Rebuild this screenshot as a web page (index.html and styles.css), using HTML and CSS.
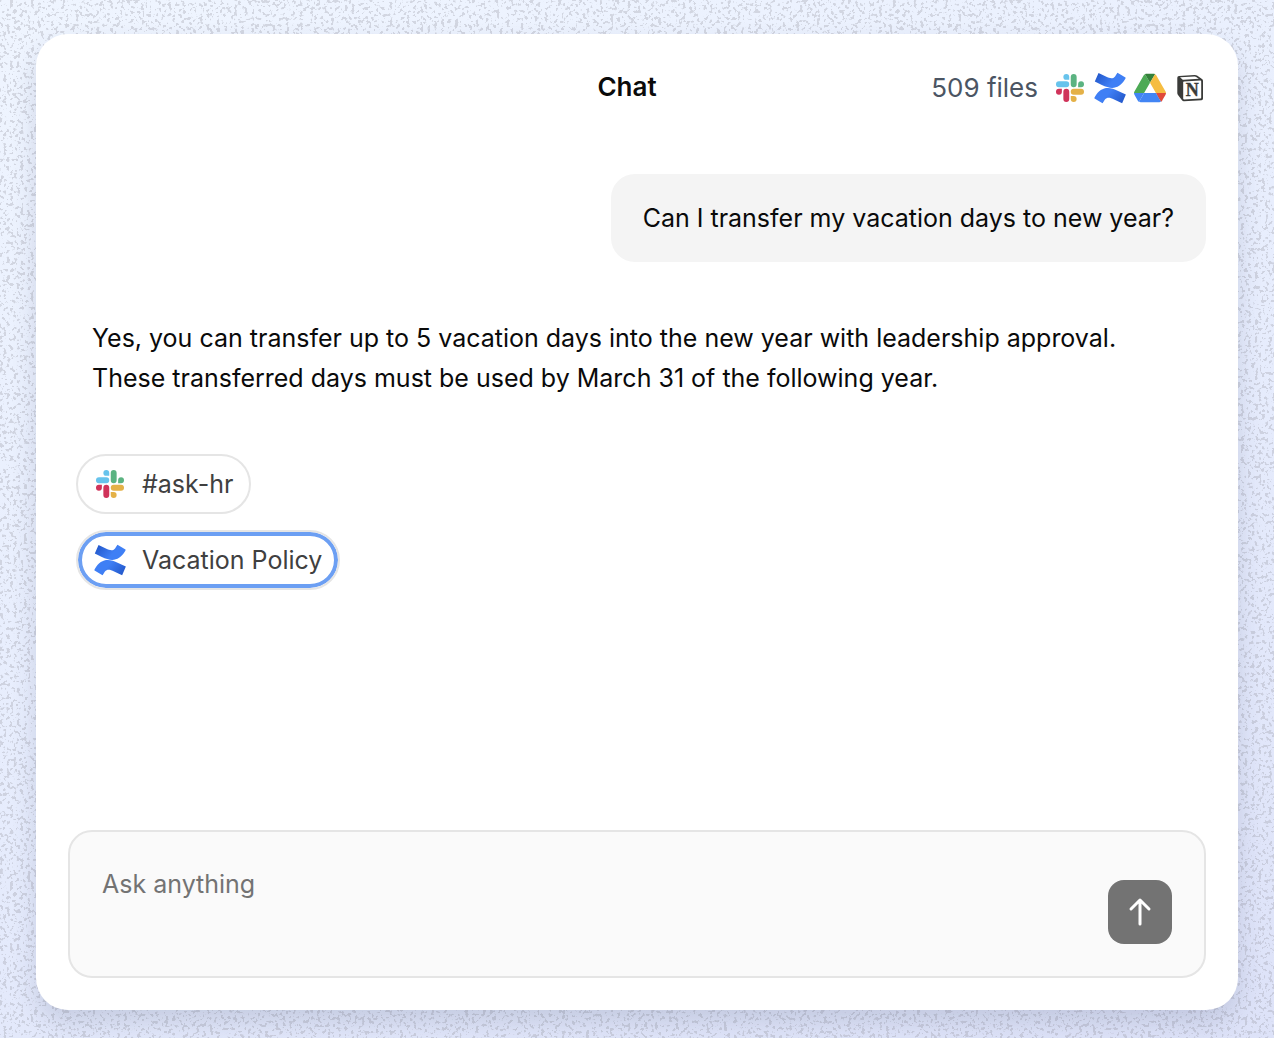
FILE: index.html
```html
<!DOCTYPE html>
<html lang="en">
<head>
  <meta charset="UTF-8" />
  <meta name="viewport" content="width=device-width, initial-scale=1.0" />
  <title>Chat</title>
  <link rel="stylesheet" href="styles.css">
</head>
<body>
  <svg class="grain" aria-hidden="true">
    <filter id="grain" x="0" y="0" width="100%" height="100%" color-interpolation-filters="sRGB">
      <feTurbulence type="fractalNoise" baseFrequency="0.29" numOctaves="2" seed="4" />
      <feColorMatrix values="0 0 0 0 0.6  0 0 0 0 0.6  0 0 0 0 0.64  16 0 0 0 -9" />
      <feComponentTransfer>
        <feFuncA type="linear" slope="0.32" />
      </feComponentTransfer>
    </filter>
    <rect width="100%" height="100%" filter="url(#grain)" />
  </svg>

  <!-- shared icons -->
  <svg class="sprite" aria-hidden="true">
    <defs>
      <linearGradient id="conf-top" x1="0" y1="0" x2="1" y2="0.4">
        <stop offset="0" stop-color="#1f52c4" />
        <stop offset="0.7" stop-color="#3f7ff5" />
      </linearGradient>
      <linearGradient id="conf-bottom" x1="1" y1="1" x2="0" y2="0.6">
        <stop offset="0" stop-color="#1f52c4" />
        <stop offset="0.7" stop-color="#3f7ff5" />
      </linearGradient>
    </defs>
    <symbol id="slack" viewBox="-1.7 -1.7 27.4 27.4">
      <path fill="#d0335a" d="M5.042 15.165a2.528 2.528 0 0 1-2.52 2.523A2.528 2.528 0 0 1 0 15.165a2.527 2.527 0 0 1 2.522-2.52h2.52zM6.313 15.165a2.527 2.527 0 0 1 2.521-2.52 2.527 2.527 0 0 1 2.521 2.52v6.313A2.528 2.528 0 0 1 8.834 24a2.528 2.528 0 0 1-2.521-2.522z" />
      <path fill="#67c3ec" d="M8.834 5.042a2.528 2.528 0 0 1-2.521-2.52A2.528 2.528 0 0 1 8.834 0a2.528 2.528 0 0 1 2.521 2.522v2.52zM8.834 6.313a2.528 2.528 0 0 1 2.521 2.521 2.528 2.528 0 0 1-2.521 2.521H2.522A2.528 2.528 0 0 1 0 8.834a2.528 2.528 0 0 1 2.522-2.521z" />
      <path fill="#5bb381" d="M18.956 8.834a2.528 2.528 0 0 1 2.522-2.521A2.528 2.528 0 0 1 24 8.834a2.528 2.528 0 0 1-2.522 2.521h-2.522zM17.688 8.834a2.528 2.528 0 0 1-2.523 2.521 2.527 2.527 0 0 1-2.52-2.521V2.522A2.527 2.527 0 0 1 15.165 0a2.528 2.528 0 0 1 2.523 2.522z" />
      <path fill="#e4b147" d="M15.165 18.956a2.528 2.528 0 0 1 2.523 2.522A2.528 2.528 0 0 1 15.165 24a2.527 2.527 0 0 1-2.52-2.522v-2.522zM15.165 17.688a2.527 2.527 0 0 1-2.52-2.523 2.526 2.526 0 0 1 2.52-2.52h6.313A2.527 2.527 0 0 1 24 15.165a2.528 2.528 0 0 1-2.522 2.523z" />
    </symbol>
    <symbol id="confluence" viewBox="0 0 24 24">
      <path fill="url(#conf-bottom)" d="M.6 18.700Q0 19.700.4 19.900L6.400 23.500C7 22.700 7.500 21.600 8.200 20.700 9.800 18.700 11.900 19 15.100 20.600L21.100 23.400 23.900 16.900 18.100 14.200C10.900 10.700 5.200 11 .6 18.700z" />
      <path fill="url(#conf-top)" d="M23.400 5.300Q24 4.300 23.600 4.100L17.600.5C17 1.300 16.500 2.400 15.800 3.300 14.200 5.300 12.100 5 8.900 3.400L3.400.7.6 7.100 5.900 9.800C13.100 13.300 18.800 13 23.400 5.300z" />
    </symbol>
    <symbol id="drive" viewBox="0 -4.6 87.3 87.3">
      <path fill="#4285f4" d="m6.6 66.85 3.85 6.65c.8 1.4 1.95 2.5 3.3 3.3l13.75-23.8h-27.5c0 1.55.4 3.1 1.2 4.5z" />
      <path fill="#4caa55" d="m43.65 25-13.75-23.8c-1.35.8-2.5 1.9-3.3 3.3l-25.4 44a9.06 9.06 0 0 0 -1.2 4.5h27.5z" />
      <path fill="#e04a3a" d="m73.55 76.8c1.35-.8 2.5-1.9 3.3-3.3l1.6-2.75 7.65-13.25c.8-1.4 1.2-2.95 1.2-4.5h-27.5l5.85 11.5z" />
      <path fill="#34803a" d="m43.65 25 13.75-23.8c-1.35-.8-2.9-1.2-4.5-1.2h-18.5c-1.6 0-3.15.45-4.5 1.2z" />
      <path fill="#4285f4" d="m59.8 53h-32.3l-13.75 23.8c1.35.8 2.9 1.2 4.5 1.2h50.8c1.6 0 3.15-.45 4.5-1.2z" />
      <path fill="#f6bd41" d="m73.4 26.5-12.7-22c-.8-1.4-1.95-2.5-3.3-3.3l-13.75 23.8 16.15 28h27.45c0-1.55-.4-3.1-1.2-4.5z" />
    </symbol>
  </svg>

  <main class="chat">
    <header class="chat-header">
      <h1>Chat</h1>
      <div class="sources">
        <span class="file-count">509 files</span>
        <div class="source-icons">
          <svg class="icon" role="img" aria-label="Slack"><use href="#slack" /></svg>
          <svg class="icon" role="img" aria-label="Confluence"><use href="#confluence" /></svg>
          <svg class="icon" role="img" aria-label="Google Drive"><use href="#drive" /></svg>
          <svg class="icon" viewBox="0 0 32 32" role="img" aria-label="Notion">
            <path fill="#3a3b39" d="M5 4 20.500 2.900Q22 2.800 23 3.500L28 7Q29 7.700 29 9V26.500Q29 28 27.500 28.200L10 29.200Q8.800 29.300 8 28.200L4 23Q3.300 22 3.300 21V5.700Q3.300 4.200 5 4Z" />
            <path fill="#fff" d="M6 5.300 20.500 4.400Q21.500 4.300 22.200 4.900L24.800 6.800 9.500 7.800Q8.800 7.900 8.200 7.300Z" />
            <path fill="#fff" d="M10 9.600 26.300 8.600Q27.200 8.600 27.200 9.500V25.600Q27.200 26.400 26.400 26.500L10 27.400Q9.200 27.400 9.200 26.600V10.500Q9.200 9.700 10 9.600Z" />
            <text class="notion-letter" x="18.200" y="24" text-anchor="middle">N</text>
          </svg>
        </div>
      </div>
    </header>

    <section class="messages">
      <p class="question">Can I transfer my vacation days to new year?</p>
      <p class="answer">Yes, you can transfer up to 5 vacation days into the new year with leadership approval. <br>These transferred days must be used by March 31 of the following year.</p>
      <div class="links">
        <a class="chip" href="#ask-hr">
          <svg class="icon" aria-hidden="true"><use href="#slack" /></svg>
          #ask-hr
        </a>
        <a class="chip active" href="#vacation-policy">
          <svg class="icon" aria-hidden="true"><use href="#confluence" /></svg>
          Vacation Policy
        </a>
      </div>
    </section>

    <form class="ask">
      <textarea rows="2" placeholder="Ask anything" aria-label="Ask anything"></textarea>
      <button type="button" aria-label="Send">
        <svg viewBox="0 0 32 32" aria-hidden="true"><path d="M16 28V4M7 13 16 4 25 13" /></svg>
      </button>
    </form>
  </main>
</body>
</html>
```
FILE: styles.css
```css
* {
  box-sizing: border-box;
}
body {
  display: flex;
  min-height: 100vh;
  margin: 0;
  padding: 34px 36px 28px;
  background: linear-gradient(160deg, #eff5ff, #e7edfd 50%, #dde2f8);
  color: #0a0a0a;
  font-family: Inter, 'Liberation Sans', sans-serif;
  font-size: 25px;
  line-height: 40px;
}
h1, p {
  margin: 0;
}
.grain {
  position: absolute;
  top: 0;
  left: 0;
  width: 100%;
  height: 100%;
}
.sprite {
  position: absolute;
  width: 0;
  height: 0;
}
.icon {
  flex: none;
  width: 32px;
  height: 32px;
}
.notion-letter {
  fill: #3a3b39;
  stroke: #3a3b39;
  stroke-width: 0.4px;
  font: bold 18px 'Liberation Serif', serif;
}

.chat {
  position: relative;
  display: flex;
  flex: 1;
  flex-direction: column;
  min-width: 0;
  padding: 32px;
  background: #fff;
  border-radius: 32px;
  box-shadow: 0 12px 24px rgba(50, 60, 100, 0.16);
}
.chat-header {
  display: grid;
  grid-template-columns: 1fr auto 1fr;
  align-items: center;
}
.chat-header h1 {
  grid-column: 2;
  padding-right: 20px;
  font-size: 26px;
  font-weight: 600;
}
.sources {
  display: flex;
  align-items: center;
  justify-content: flex-end;
  gap: 16px;
  padding-top: 2px;
}
.file-count {
  color: #4b5563;
  font-size: 26px;
}
.source-icons {
  display: flex;
  gap: 8px;
}

.messages {
  display: flex;
  flex: 1;
  flex-direction: column;
  padding: 66px 0 32px;
}
.question {
  align-self: flex-end;
  padding: 24px 32px;
  background: #f4f4f4;
  border-radius: 24px;
}
.answer {
  padding: 56px 24px;
}
.links {
  display: flex;
  flex-direction: column;
  align-items: flex-start;
  gap: 16px;
  padding: 0 8px;
}
.chip {
  display: flex;
  align-items: center;
  gap: 16px;
  padding: 8px 16px;
  background: #fff;
  border: 2px solid #e5e5e5;
  border-radius: 30px;
  color: #404040;
  text-decoration: none;
}
.chip.active {
  box-shadow: inset 0 0 0 4px #6c9ff3;
}

.ask {
  display: flex;
  align-items: flex-end;
  gap: 16px;
  padding: 32px;
  background: #fafafa;
  border: 2px solid #e5e5e5;
  border-radius: 24px;
}
.ask textarea {
  flex: 1;
  height: 80px;
  padding: 0;
  border: 0;
  outline: 0;
  background: none;
  color: inherit;
  font: inherit;
  resize: none;
}
.ask textarea::placeholder {
  color: #737373;
}
.ask button {
  display: grid;
  place-items: center;
  width: 64px;
  height: 64px;
  padding: 0;
  border: 0;
  border-radius: 16px;
  background: #737373;
  cursor: pointer;
}
.ask button svg {
  width: 32px;
  height: 32px;
  fill: none;
  stroke: #fff;
  stroke-width: 3px;
  stroke-linecap: round;
  stroke-linejoin: round;
}
```
